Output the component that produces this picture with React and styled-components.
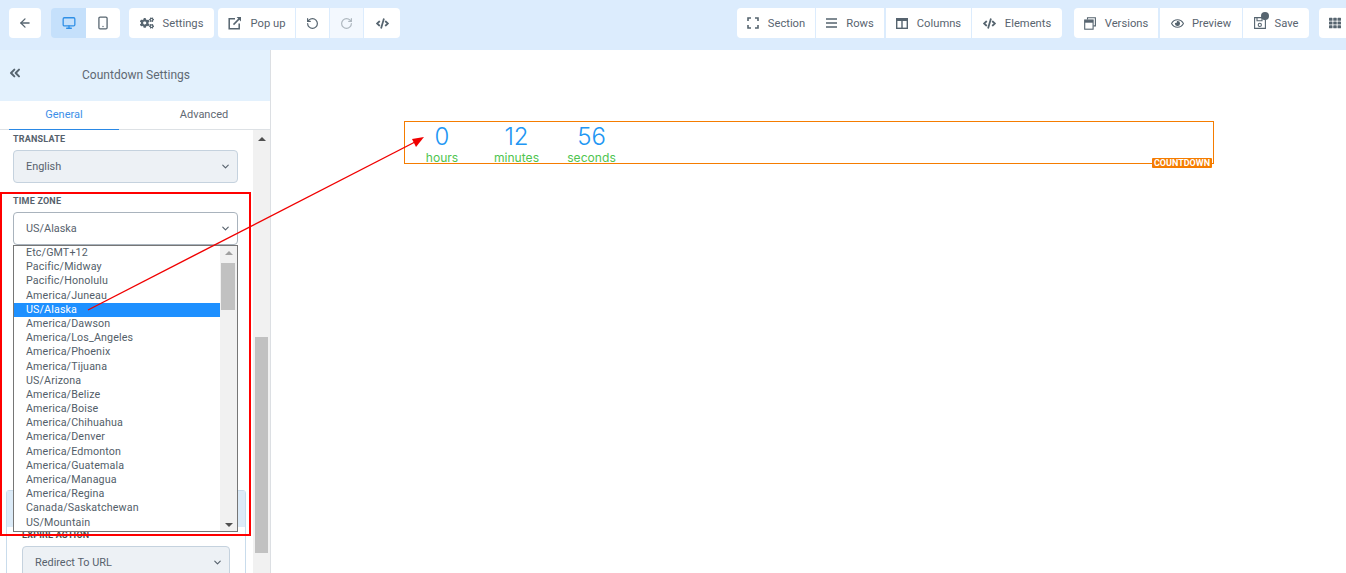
import React from 'react';
import styled, { createGlobalStyle } from 'styled-components';
import { ArrowLeft, Monitor, Smartphone, RotateCcw, RotateCw, ChevronDown, ChevronsLeft } from 'lucide-react';
import { FaCogs, FaCode, FaRegEye, FaTh } from 'react-icons/fa';

const GlobalStyle = createGlobalStyle`
  html, body { margin: 0; padding: 0; height: 100%; overflow: hidden; background: #fff; }
  body { font-family: Roboto, "Liberation Sans", sans-serif; color: #5a6570; }
`;

const Page = styled.div`
  position: relative;
  width: 1346px;
  height: 573px;
  display: flex;
  flex-direction: column;
  overflow: hidden;
`;

const Toolbar = styled.div`
  height: 50px;
  flex: none;
  display: flex;
  align-items: flex-start;
  padding: 8px 0 0 9px;
  box-sizing: border-box;
  background: #dcecfd;
`;

const Group = styled.div`
  display: flex;
  flex: none;
  height: 30px;
  margin-left: ${(p) => p.$gap || 0}px;
`;

const ToolButton = styled.div`
  width: ${(p) => p.$w}px;
  height: 30px;
  flex: none;
  display: flex;
  align-items: center;
  justify-content: center;
  gap: ${(p) => p.$iconGap || 9}px;
  box-sizing: border-box;
  font-size: 11.2px;
  color: #59646f;
  white-space: nowrap;
  background: ${(p) => (p.$active ? '#c5e0fb' : p.$dim ? '#f3f8fe' : '#fff')};
  margin-right: ${(p) => p.$mr || 0}px;
  &:first-child { border-radius: 4px 0 0 4px; }
  &:last-child { border-radius: 0 4px 4px 0; }
  &:only-child { border-radius: 4px; }
`;

const Main = styled.div`
  flex: 1;
  display: flex;
  min-height: 0;
`;

const Sidebar = styled.aside`
  width: 271px;
  flex: none;
  display: flex;
  flex-direction: column;
  box-sizing: border-box;
  border-right: 1px solid #dcdfe3;
`;

const SideHeader = styled.div`
  position: relative;
  height: 51px;
  flex: none;
  display: flex;
  align-items: center;
  justify-content: center;
  padding: 0 0 2px 2px;
  box-sizing: border-box;
  background: #e3f1fd;
  font-size: 12px;
  color: #5f6973;
`;

const BackIcon = styled.span`
  position: absolute;
  left: 7px;
  top: 15px;
  display: flex;
  color: #56646f;
`;

const Tabs = styled.div`
  height: 29px;
  flex: none;
  display: flex;
  padding-left: 9px;
  box-sizing: border-box;
  border-bottom: 1px solid #dde1e5;
`;

const Tab = styled.div`
  width: ${(p) => p.$w}px;
  flex: none;
  height: 29px;
  box-sizing: border-box;
  padding-top: 7px;
  text-align: center;
  font-size: 11px;
  color: ${(p) => (p.$active ? '#3d8fe8' : '#5f6973')};
  border-bottom: ${(p) => (p.$active ? '1px solid #2a88e5' : 'none')};
`;

const SideBody = styled.div`
  flex: 1;
  display: flex;
  min-height: 0;
`;

const SideContent = styled.div`
  width: 253px;
  flex: none;
  overflow: hidden;
  box-sizing: border-box;
  padding: 4px 15px 0 13px;
`;

const Field = styled.div`
  position: relative;
  margin-bottom: ${(p) => p.$mb || 0}px;
`;

const Label = styled.div`
  height: 13px;
  line-height: 11px;
  font-size: 9px;
  font-weight: 700;
  letter-spacing: 0.2px;
  color: #56616c;
  margin-bottom: 3px;
`;

const SelectBox = styled.div`
  height: 33px;
  display: flex;
  align-items: center;
  justify-content: space-between;
  box-sizing: border-box;
  padding: 0 6px 0 12px;
  border: 1px solid ${(p) => (p.$open ? '#a9b3bd' : '#c5d2de')};
  border-radius: 4px;
  background: ${(p) => (p.$open ? '#fff' : '#edf1f5')};
  font-size: 10.9px;
  color: #57626d;
`;

const DropList = styled.div`
  position: absolute;
  left: 0;
  top: 49px;
  width: 225px;
  height: 287px;
  z-index: 5;
  display: flex;
  box-sizing: border-box;
  overflow: hidden;
  background: #fff;
  border: 1px solid #767676;
`;

const Options = styled.div`
  width: 206px;
  flex: none;
  overflow: hidden;
`;

const Option = styled.div`
  height: 14.2px;
  line-height: 14.2px;
  padding-left: 12px;
  font-size: 10.7px;
  letter-spacing: 0.14px;
  white-space: nowrap;
  color: ${(p) => (p.$selected ? '#fff' : '#535e69')};
  background: ${(p) => (p.$selected ? '#1e90ff' : '#fff')};
`;

const ListScroll = styled.div`
  flex: 1;
  display: flex;
  flex-direction: column;
  align-items: center;
  background: #f1f1f1;
`;

const Track = styled.div`
  flex: 1;
  align-self: stretch;
  margin: 0 2px 0 1px;
`;

const ListThumb = styled.div`
  height: 47px;
  background: #c1c1c1;
`;

const UpTri = styled.div`
  flex: none;
  margin: ${(p) => p.$m};
  width: 0;
  height: 0;
  border-left: 4px solid transparent;
  border-right: 4px solid transparent;
  border-bottom: 4px solid ${(p) => p.$c};
`;

const DownTri = styled.div`
  flex: none;
  margin: ${(p) => p.$m};
  width: 0;
  height: 0;
  border-left: 4px solid transparent;
  border-right: 4px solid transparent;
  border-top: 4px solid ${(p) => p.$c};
`;

const Panel = styled.div`
  margin: 0 -8px 0 -7px;
  border: 1px solid #c9dcec;
  border-radius: 3px 3px 0 0;
  height: 90px;
  box-sizing: border-box;
`;

const PanelHead = styled.div`
  height: 36px;
  background: #dcebf8;
`;

const PanelBody = styled.div`
  padding: 3px 15px 0 15px;
`;

const DarkLabel = styled(Label)`
  color: #4b4b4b;
  margin-bottom: 3px;
`;

const SideScroll = styled.div`
  width: 17px;
  flex: none;
  display: flex;
  flex-direction: column;
  align-items: center;
  background: #f1f1f1;
`;

const SideThumb = styled.div`
  width: 13px;
  height: 216px;
  background: #c1c1c1;
  margin-top: 196px;
`;

const Canvas = styled.main`
  flex: 1;
  background: #fff;
  padding: 71px 0 0 133px;
`;

const Widget = styled.div`
  position: relative;
  width: 810px;
  height: 43px;
  box-sizing: border-box;
  border: 1px solid #f57c00;
  display: flex;
  padding-left: 20px;
`;

const Unit = styled.div`
  width: ${(p) => p.$w}px;
  margin-left: ${(p) => p.$ml || 0}px;
  flex: none;
  display: flex;
  flex-direction: column;
  align-items: center;
`;

const Num = styled.div`
  height: 28px;
  line-height: 30px;
  font-family: Inter, sans-serif;
  font-size: 24px;
  font-weight: 300;
  color: #2196f3;
`;

const UnitLabel = styled.div`
  font-family: Inter, sans-serif;
  font-size: 12.1px;
  line-height: 15px;
  white-space: nowrap;
  color: #4fc54f;
`;

const Badge = styled.div`
  position: absolute;
  right: 1px;
  bottom: -5px;
  height: 10px;
  padding: 0 2px;
  line-height: 10px;
  border-radius: 1px;
  background: #f57c00;
  color: #fff;
  font-size: 9px;
  font-weight: 700;
`;

const Overlay = styled.svg`
  position: absolute;
  left: 0;
  top: 0;
  z-index: 10;
  pointer-events: none;
`;

const SaveWrap = styled.span`
  position: relative;
  display: flex;
`;

const SaveDot = styled.span`
  position: absolute;
  right: -3px;
  top: -5px;
  width: 8px;
  height: 8px;
  border-radius: 50%;
  background: #56646f;
`;

const zones = [
  'Etc/GMT+12', 'Pacific/Midway', 'Pacific/Honolulu', 'America/Juneau', 'US/Alaska', 'America/Dawson',
  'America/Los_Angeles', 'America/Phoenix', 'America/Tijuana', 'US/Arizona', 'America/Belize', 'America/Boise',
  'America/Chihuahua', 'America/Denver', 'America/Edmonton', 'America/Guatemala', 'America/Managua',
  'America/Regina', 'Canada/Saskatchewan', 'US/Mountain',
];

const ic = { size: 14, strokeWidth: 2.2, color: '#56646f' };
const stroke = { fill: 'none', stroke: '#56646f' };

const PopupIcon = () => (
  <svg width="14" height="14" viewBox="0 0 14 14" {...stroke} strokeWidth="1.5">
    <path d="M7 2.7H1.2v10h10V7.5" />
    <path d="M5.5 8.6 11.6 2.4" />
    <path d="M8.6 1h4.4v4.4z" fill="#56646f" stroke="none" />
  </svg>
);

const SectionIcon = () => (
  <svg width="12" height="12" viewBox="0 0 12 12" {...stroke} strokeWidth="1.6">
    <path d="M1 4V1h3M8 1h3v3M11 8v3H8M4 11H1V8" />
  </svg>
);

const RowsIcon = () => (
  <svg width="11" height="10" viewBox="0 0 11 10" {...stroke} strokeWidth="1.3">
    <path d="M0 1h11M0 5h11M0 9h11" />
  </svg>
);

const ColumnsIcon = () => (
  <svg width="12" height="11" viewBox="0 0 12 11" {...stroke} strokeWidth="1.4">
    <rect x="0.7" y="0.7" width="10.6" height="9.6" />
    <path d="M6 1v9" />
    <path d="M0 1.8h12" strokeWidth="2.4" />
  </svg>
);

const VersionsIcon = () => (
  <svg width="12" height="13" viewBox="0 0 12 13" {...stroke} strokeWidth="1.1">
    <path d="M3.5 2.6V.7h7.9v8.2H9.4" />
    <rect x="0.7" y="3" width="8.4" height="9.2" />
    <path d="M0.7 4.4h8.4" strokeWidth="2.6" />
  </svg>
);

const SaveIcon = () => (
  <svg width="12" height="12" viewBox="0 0 12 12" {...stroke} strokeWidth="1.1">
    <path d="M.6.6h8.2l2.6 2.6v8.2H.6z" />
    <path d="M3 .8v3h5v-3" />
    <circle cx="5.8" cy="7.9" r="1.6" />
  </svg>
);

export default function App() {
  return (
    <Page>
      <GlobalStyle />
      <Toolbar>
        <Group>
          <ToolButton $w={32}><ArrowLeft {...ic} /></ToolButton>
        </Group>
        <Group $gap={10}>
          <ToolButton $w={35} $active><Monitor {...ic} color="#2f8fe6" /></ToolButton>
          <ToolButton $w={34}><Smartphone {...ic} /></ToolButton>
        </Group>
        <Group $gap={9}>
          <ToolButton $w={85}><FaCogs size={14} color="#56646f" />Settings</ToolButton>
        </Group>
        <Group $gap={4}>
          <ToolButton $w={77} $mr={1}><PopupIcon />Pop up</ToolButton>
          <ToolButton $w={33} $mr={1}><RotateCcw {...ic} size={13} /></ToolButton>
          <ToolButton $w={33} $mr={1} $dim><RotateCw {...ic} size={13} color="#aeb7bf" /></ToolButton>
          <ToolButton $w={36}><FaCode size={13} color="#56646f" /></ToolButton>
        </Group>
        <Group $gap={337}>
          <ToolButton $w={78} $mr={1}><SectionIcon />Section</ToolButton>
          <ToolButton $w={68} $mr={2}><RowsIcon />Rows</ToolButton>
          <ToolButton $w={85} $mr={1}><ColumnsIcon />Columns</ToolButton>
          <ToolButton $w={90}><FaCode size={13} color="#56646f" />Elements</ToolButton>
        </Group>
        <Group $gap={12}>
          <ToolButton $w={84} $mr={2}><VersionsIcon />Versions</ToolButton>
          <ToolButton $w={82} $mr={1} $iconGap={8}><FaRegEye size={13} color="#56646f" />Preview</ToolButton>
          <ToolButton $w={66}>
            <SaveWrap><SaveIcon /><SaveDot /></SaveWrap>Save
          </ToolButton>
        </Group>
        <Group $gap={10}>
          <ToolButton $w={32}><FaTh size={12} color="#56646f" /></ToolButton>
        </Group>
      </Toolbar>
      <Main>
        <Sidebar>
          <SideHeader>
            <BackIcon><ChevronsLeft size={16} strokeWidth={3} /></BackIcon>
            Countdown Settings
          </SideHeader>
          <Tabs>
            <Tab $w={110} $active>General</Tab>
            <Tab $w={170}>Advanced</Tab>
          </Tabs>
          <SideBody>
            <SideContent>
              <Field $mb={13}>
                <Label>TRANSLATE</Label>
                <SelectBox>English<ChevronDown size={11} strokeWidth={2.5} /></SelectBox>
              </Field>
              <Field $mb={245}>
                <Label>TIME ZONE</Label>
                <SelectBox $open>US/Alaska<ChevronDown size={11} strokeWidth={2.5} /></SelectBox>
                <DropList>
                  <Options>
                    {zones.map((z) => (
                      <Option key={z} $selected={z === 'US/Alaska'}>{z}</Option>
                    ))}
                  </Options>
                  <ListScroll>
                    <UpTri $c="#a0a0a0" $m="5px 0 8px" />
                    <Track><ListThumb /></Track>
                    <DownTri $c="#505050" $m="0 0 4px" />
                  </ListScroll>
                </DropList>
              </Field>
              <Panel>
                <PanelHead />
                <PanelBody>
                  <DarkLabel>EXPIRE ACTION</DarkLabel>
                  <SelectBox>Redirect To URL<ChevronDown size={11} strokeWidth={2.5} /></SelectBox>
                </PanelBody>
              </Panel>
            </SideContent>
            <SideScroll>
              <UpTri $c="#505050" $m="7px 0 0" />
              <SideThumb />
            </SideScroll>
          </SideBody>
        </Sidebar>
        <Canvas>
          <Widget>
            <Unit $w={34}><Num>0</Num><UnitLabel>hours</UnitLabel></Unit>
            <Unit $w={47} $ml={34}><Num>12</Num><UnitLabel>minutes</UnitLabel></Unit>
            <Unit $w={47} $ml={28}><Num>56</Num><UnitLabel>seconds</UnitLabel></Unit>
            <Badge>COUNTDOWN</Badge>
          </Widget>
        </Canvas>
      </Main>
      <Overlay width="1346" height="573">
        <rect x="1" y="193" width="249" height="342" fill="none" stroke="#ff0000" strokeWidth="2" />
        <line x1="88" y1="310" x2="415" y2="142" stroke="#f00000" strokeWidth="1.4" />
        <polygon points="424,137 412,139 416,147" fill="#f00000" />
      </Overlay>
    </Page>
  );
}
